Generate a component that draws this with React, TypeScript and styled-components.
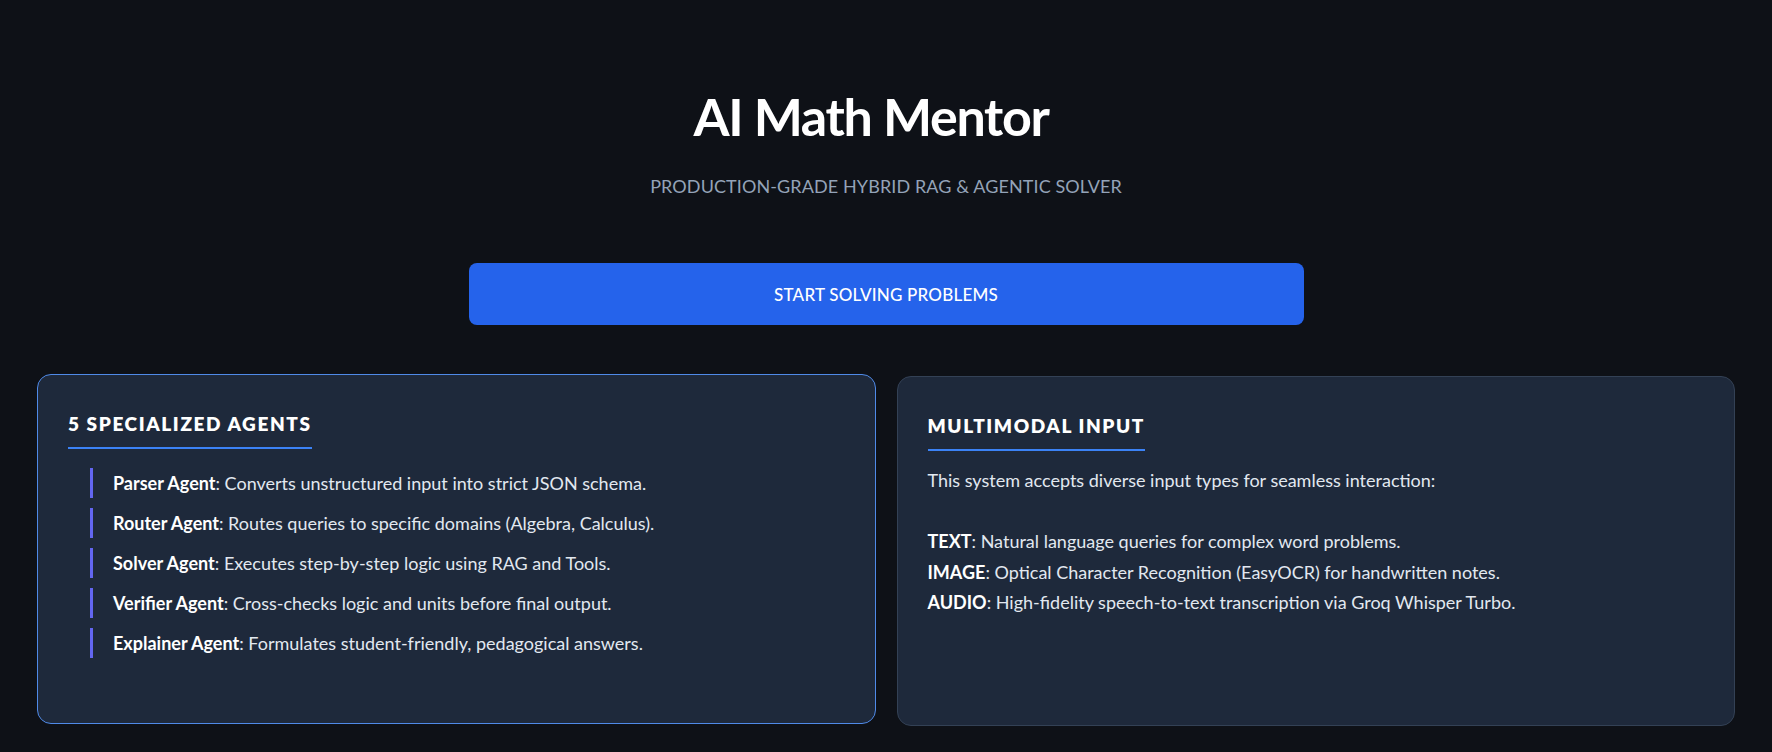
import React from "react";
import styled, { createGlobalStyle } from "styled-components";

const Global = createGlobalStyle`
  html, body { margin: 0; padding: 0; background: #0e1117; }
  body { font-family: Lato, "Noto Sans", sans-serif; color: #e2e8f0; }
  * { box-sizing: border-box; }
`;

const Page = styled.main`
  width: 1772px;
  min-height: 752px;
  padding: 83px 37px 24px 37px;
  display: flex;
  flex-direction: column;
  align-items: center;
`;

const Title = styled.h1`
  margin: 0;
  padding-right: 30px;
  font-size: 52px;
  line-height: 67px;
  font-weight: 700;
  color: #ffffff;
  letter-spacing: -1.3px;
`;

const Subtitle = styled.p`
  margin: 24px 0 0 0;
  font-size: 18px;
  line-height: 25px;
  color: #94a3b8;
  letter-spacing: 0.1px;
  text-transform: uppercase;
`;

const CTA = styled.button`
  margin-top: 64px;
  width: 835px;
  height: 62px;
  border: none;
  border-radius: 8px;
  background: #2563eb;
  color: #ffffff;
  font-family: inherit;
  font-size: 17px;
  font-weight: 500;
  letter-spacing: 0.2px;
  cursor: pointer;
`;

const Grid = styled.section`
  margin-top: 51px;
  width: 100%;
  display: grid;
  grid-template-columns: 1fr 1fr;
  gap: 21px;
  align-items: start;
`;

const Card = styled.div<{ $active?: boolean }>`
  min-height: 350px;
  background: #1e293b;
  border: 1px solid ${(p) => (p.$active ? "#4f8ae8" : "#334155")};
  border-radius: 14px;
  padding: 36px 30px 30px 30px;
  transform: ${(p) => (p.$active ? "translateY(-2px)" : "none")};
`;

const CardTitle = styled.h3`
  display: inline-block;
  margin: 0;
  padding-bottom: 11px;
  border-bottom: 2px solid #3b82f6;
  font-size: 19px;
  line-height: 25px;
  font-weight: 800;
  letter-spacing: 1.6px;
  color: #ffffff;
  text-transform: uppercase;
`;

const AgentList = styled.ul`
  list-style: none;
  margin: 19px 0 0 0;
  padding: 0 0 0 22px;
  display: flex;
  flex-direction: column;
  gap: 10px;
`;

const AgentItem = styled.li`
  border-left: 3px solid #6366f1;
  padding-left: 20px;
  font-size: 18px;
  line-height: 30px;
  color: #e2e8f0;
`;

const Label = styled.strong`
  color: #ffffff;
  font-weight: 700;
`;

const Body = styled.div`
  margin-top: 14px;
  font-size: 18px;
  line-height: 30.5px;
  color: #e2e8f0;
`;

const Line = styled.div``;
const Blank = styled.div`
  height: 30.5px;
`;

const agents = [
  ["Parser Agent", "Converts unstructured input into strict JSON schema."],
  ["Router Agent", "Routes queries to specific domains (Algebra, Calculus)."],
  ["Solver Agent", "Executes step-by-step logic using RAG and Tools."],
  ["Verifier Agent", "Cross-checks logic and units before final output."],
  ["Explainer Agent", "Formulates student-friendly, pedagogical answers."],
];

const modes = [
  ["TEXT", "Natural language queries for complex word problems."],
  ["IMAGE", "Optical Character Recognition (EasyOCR) for handwritten notes."],
  ["AUDIO", "High-fidelity speech-to-text transcription via Groq Whisper Turbo."],
];

export default function App() {
  return (
    <>
      <Global />
      <Page>
        <Title>AI Math Mentor</Title>
        <Subtitle>Production-Grade Hybrid RAG &amp; Agentic Solver</Subtitle>
        <CTA>START SOLVING PROBLEMS</CTA>
        <Grid>
          <Card $active>
            <CardTitle>5 Specialized Agents</CardTitle>
            <AgentList>
              {agents.map(([k, v]) => (
                <AgentItem key={k}>
                  <Label>{k}</Label>: {v}
                </AgentItem>
              ))}
            </AgentList>
          </Card>
          <Card>
            <CardTitle>Multimodal Input</CardTitle>
            <Body>
              <Line>This system accepts diverse input types for seamless interaction:</Line>
              <Blank />
              {modes.map(([k, v]) => (
                <Line key={k}>
                  <Label>{k}</Label>: {v}
                </Line>
              ))}
            </Body>
          </Card>
        </Grid>
      </Page>
    </>
  );
}
